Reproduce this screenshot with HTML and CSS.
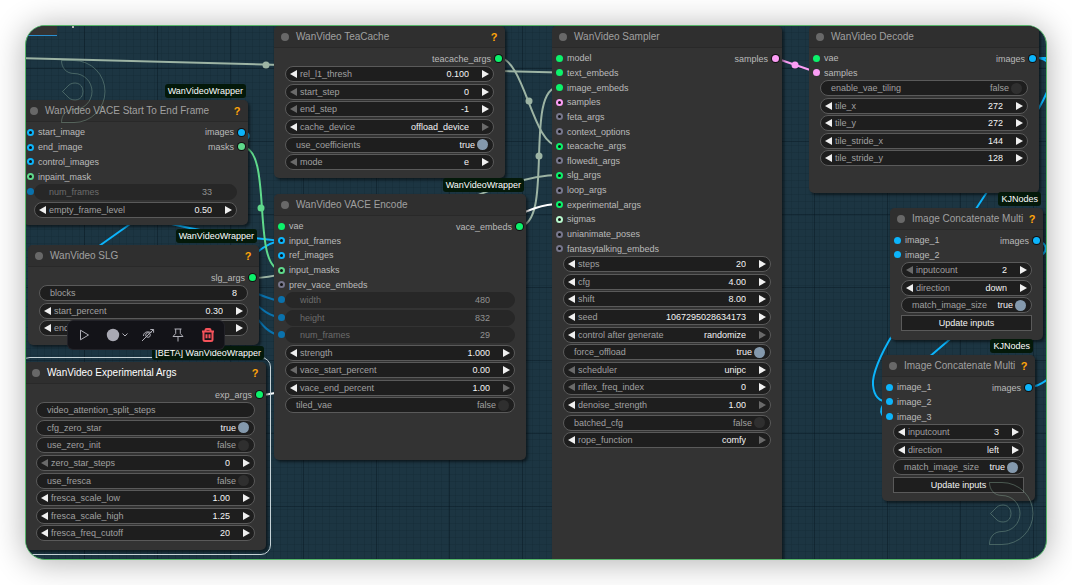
FILE: index.html
```
<!DOCTYPE html>
<html lang="en">
<head>
  <meta charset="utf-8" />
  <title>WanVideo workflow</title>
  <meta name="viewport" content="width=device-width, initial-scale=1" />

  <link rel="stylesheet" href="styles.css">
</head>
<body>
  <main class="canvas" id="canvas">
    <svg class="links" aria-hidden="true">
      <g transform="translate(-26 -26)">
        <g class="link sage">
          <path d="M20 58 L559 72.500" />
          <path d="M498 57.600 C525 57.600 532 146 559 146" />
          <path d="M519 226 C555 226 523 87 559 87" />
          <path d="M252 278 C333 278 478 175 559 175" />
          <circle cx="266" cy="65" r="3.500" />
          <circle cx="529" cy="101" r="3.500" />
          <circle cx="539" cy="156" r="3.500" />
        </g>
        <g class="link blue">
          <path d="M85 256 L140 217" />
          <path d="M160 221 C200 232 250 238 282 241" />
          <path d="M255 254 C263 247 272 241 282 241" />
          <path d="M242 132 C250 132 250 137 246 140" />
          <path d="M1033 58 H1060" />
          <path d="M1039 58 C1060 62 1052 85 1039 108 L987 192 L970 218" />
          <path d="M1036 241 C1048 242 1048 252 1040 256 L949 340 L928 358" />
          <path d="M893 334 C880 355 872 375 873 385 C874 397 880 402 889 402" />
          <path d="M883 405 C880 410 881 414 884 417" />
          <path d="M1029 387 C1037 387 1042 384 1048 379" />
        </g>
        <g class="link navy">
          <path d="M250 291 C262 295 270 300 282 301" />
          <path d="M250 298 C262 311 270 316 282 318" />
          <path d="M250 308 C262 327 270 334 282 336" />
        </g>
        <g class="link green">
          <path d="M242 147 C274 147 250 270 282 270" />
          <circle cx="261" cy="208" r="3.500" />
        </g>
        <g class="link pink">
          <path d="M775 58 L816 72" />
          <circle cx="795" cy="65" r="3.500" />
        </g>
        <g class="link white">
          <path d="M259 395 C348 395 470 204 559 204" />
        </g>
        <path class="group-corner" d="M26 26 H57 V35 H26 Z" />
        <path class="group-edge" d="M26 35.500 H57" />
        <path class="group-mark" d="M73 25 V28" />
      </g>
    </svg>

    <div class="toolbar" role="toolbar" aria-label="Selection">
      <button type="button" aria-label="Run">
        <svg width="12" height="12" viewBox="0 0 12 12"><path d="M2.500 1.200 L10.500 6 L2.500 10.800 Z" /></svg>
      </button>
      <button type="button" class="color" aria-label="Color">
        <svg width="19" height="14" viewBox="0 0 19 14"><circle cx="7" cy="7" r="6.200" /><path d="M16.500 5.500 L19 8 L21.500 5.500" /></svg>
      </button>
      <button type="button" aria-label="Bypass">
        <svg width="14" height="14" viewBox="0 0 14 14"><circle cx="7" cy="7" r="2.300" /><path d="M1 13 L12.300 1.700 M2.500 8 C2.500 4.500 5.500 3.500 8 4 L10.500 4.500 M9.300 1.500 H12.600 V4.700" /></svg>
      </button>
      <button type="button" aria-label="Pin">
        <svg width="14" height="14" viewBox="0 0 14 14"><path d="M3.500 1 H10.500 M4.700 1 V5.500 L2 8.500 H12 L9.300 5.500 V1 M7 8.500 V13.500" /></svg>
      </button>
      <button type="button" class="danger" aria-label="Delete">
        <svg width="14" height="14" viewBox="0 0 14 14"><path d="M1 3.500 H13 M4.500 3.500 V2 Q4.500 1 5.500 1 H8.500 Q9.500 1 9.500 2 V3.500 M2.500 3.500 V11.500 Q2.500 13 4 13 H10 Q11.500 13 11.500 11.500 V3.500 M5.500 6.300 V10.300 M8.500 6.300 V10.300" /></svg>
      </button>
    </div>

    <svg class="watermark" aria-hidden="true">
      <defs>
        <g id="mark">
          <path d="M.5 .5 H13 A31 31 0 0 1 13 62.500 H.5 C.5 55 5 49.500 13 49.500 A18 18 0 0 0 13 13.500 C5 13.500 .5 7.500 .5 .5 Z" />
          <path d="M1.500 31.500 L8 25 C12 21.500 22 22 22 31.500 C22 41 12 41.500 8 38 Z" />
        </g>
      </defs>
      <use href="#mark" x="35" y="34" />
      <use href="#mark" x="963" y="456" />
    </svg>
  </main>

  <script src="graph.js"></script>
</body>
</html>
```
FILE: graph.js
```
const SCALE = 11 / 15;
const SLOT_HEIGHT = 20 * SCALE;
const WIDGET_HEIGHT = 24 * SCALE;

// slot: [name, colour, optional]
// widget: [type, name, value, dimmed arrow: "l" or "r"]
const nodes = [
  {
    title: "WanVideo TeaCache", x: 248, y: 0, w: 231, h: 152, help: true,
    outputs: [["teacache_args", "green"]],
    widgets: [
      ["number", "rel_l1_thresh", "0.100"],
      ["number", "start_step", "0", "l"],
      ["number", "end_step", "-1", "l"],
      ["combo", "cache_device", "offload_device", "r"],
      ["toggle", "use_coefficients", true],
      ["combo", "mode", "e", "l"]
    ]
  },
  {
    title: "WanVideo VACE Encode", x: 248, y: 168, w: 252, h: 266, badge: "WanVideoWrapper",
    inputs: [["vae", "green"], ["input_frames", "blue", 1], ["ref_images", "blue", 1], ["input_masks", "mint", 1], ["prev_vace_embeds", "grey", 1]],
    outputs: [["vace_embeds", "green"]],
    widgets: [
      ["linked", "width", "480"],
      ["linked", "height", "832"],
      ["linked", "num_frames", "29"],
      ["number", "strength", "1.000"],
      ["number", "vace_start_percent", "0.00", "l"],
      ["number", "vace_end_percent", "1.00", "r"],
      ["toggle", "tiled_vae", false]
    ]
  },
  {
    title: "WanVideo VACE Start To End Frame", x: -3, y: 74, w: 225, h: 125, help: true, badge: "WanVideoWrapper",
    inputs: [["start_image", "blue", 1], ["end_image", "blue", 1], ["control_images", "blue", 1], ["inpaint_mask", "mint", 1]],
    outputs: [["images", "blue"], ["masks", "mint"]],
    widgets: [
      ["linked", "num_frames", "33"],
      ["number", "empty_frame_level", "0.50"]
    ]
  },
  {
    title: "WanVideo SLG", x: 2, y: 219, w: 231, h: 100, help: true, badge: "WanVideoWrapper",
    outputs: [["slg_args", "green"]],
    widgets: [
      ["text", "blocks", "8"],
      ["number", "start_percent", "0.30"],
      ["number", "end_percent", ""]
    ]
  },
  {
    title: "WanVideo Experimental Args", x: -1, y: 336, w: 241, h: 188, help: true, badge: "[BETA] WanVideoWrapper", selected: true,
    outputs: [["exp_args", "green"]],
    widgets: [
      ["text", "video_attention_split_steps", ""],
      ["toggle", "cfg_zero_star", true],
      ["toggle", "use_zero_init", false],
      ["number", "zero_star_steps", "0", "l"],
      ["toggle", "use_fresca", false],
      ["number", "fresca_scale_low", "1.00"],
      ["number", "fresca_scale_high", "1.25"],
      ["number", "fresca_freq_cutoff", "20"]
    ]
  },
  {
    title: "WanVideo Sampler", x: 526, y: 0, w: 230, h: 560,
    inputs: [
      ["model", "green"], ["text_embeds", "green"], ["image_embeds", "green"], ["samples", "pink", 1],
      ["feta_args", "grey", 1], ["context_options", "grey", 1], ["teacache_args", "green", 1],
      ["flowedit_args", "grey", 1], ["slg_args", "green", 1], ["loop_args", "grey", 1],
      ["experimental_args", "green", 1], ["sigmas", "pale", 1], ["unianimate_poses", "grey", 1],
      ["fantasytalking_embeds", "grey", 1]
    ],
    outputs: [["samples", "pink"]],
    widgets: [
      ["number", "steps", "20"],
      ["number", "cfg", "4.00"],
      ["number", "shift", "8.00"],
      ["number", "seed", "1067295028634173"],
      ["combo", "control after generate", "randomize", "r"],
      ["toggle", "force_offload", true],
      ["combo", "scheduler", "unipc", "l"],
      ["number", "riflex_freq_index", "0", "l"],
      ["number", "denoise_strength", "1.00", "r"],
      ["toggle", "batched_cfg", false],
      ["combo", "rope_function", "comfy", "r"]
    ]
  },
  {
    title: "WanVideo Decode", x: 783, y: 0, w: 230, h: 167,
    inputs: [["vae", "green"], ["samples", "pink"]],
    outputs: [["images", "blue"]],
    widgets: [
      ["toggle", "enable_vae_tiling", false],
      ["number", "tile_x", "272"],
      ["number", "tile_y", "272"],
      ["number", "tile_stride_x", "144"],
      ["number", "tile_stride_y", "128"]
    ]
  },
  {
    title: "Image Concatenate Multi", x: 864, y: 182, w: 153, h: 132, help: true, badge: "KJNodes",
    inputs: [["image_1", "blue"], ["image_2", "blue"]],
    outputs: [["images", "blue"]],
    widgets: [
      ["number", "inputcount", "2", "l"],
      ["combo", "direction", "down"],
      ["toggle", "match_image_size", true],
      ["button", "Update inputs"]
    ]
  },
  {
    title: "Image Concatenate Multi", x: 856, y: 329, w: 153, h: 146, help: true, badge: "KJNodes",
    inputs: [["image_1", "blue"], ["image_2", "blue"], ["image_3", "blue"]],
    outputs: [["images", "blue"]],
    widgets: [
      ["number", "inputcount", "3"],
      ["combo", "direction", "left"],
      ["toggle", "match_image_size", true],
      ["button", "Update inputs"]
    ]
  }
];

function slotList(slots, side) {
  const items = slots.map(([name, colour, optional]) =>
    `<li class="slot"><span class="dot ${colour}${optional ? " ring" : ""}"></span>${name}</li>`
  ).join("");
  return `<ul class="slots ${side}" style="height:${Math.round(slots.length * SLOT_HEIGHT)}px">${items}</ul>`;
}

function arrow(side, dim, name) {
  const points = side === "l" ? "7,0 7,8 0,4" : "0,0 0,8 7,4";
  const action = side === "l" ? "Previous" : "Next";
  return `<button type="button" class="arrow ${side}${dim === side ? " dim" : ""}" aria-label="${action} ${name}">
    <svg width="7" height="8"><polygon points="${points}" /></svg></button>`;
}

function widget([type, name, value, dim], id) {
  const label = `<label for="${id}">${name}</label>`;
  if (type === "button") {
    return `<div class="row"><button type="button" class="action">${name}</button></div>`;
  }
  if (type === "toggle") {
    return `<div class="row"><div class="widget toggle">${label}<span class="state">${value}</span>
      <input type="checkbox" id="${id}"${value ? " checked" : ""}></div></div>`;
  }
  if (type === "text") {
    return `<div class="row"><div class="widget text">${label}<input type="text" id="${id}" value="${value}"></div></div>`;
  }
  if (type === "linked") {
    return `<div class="row"><span class="dot link-in"></span><div class="widget linked">${label}
      <input type="text" id="${id}" value="${value}" disabled></div></div>`;
  }
  const field = type === "combo"
    ? `<select id="${id}"><option>${value}</option></select>`
    : `<input type="text" inputmode="decimal" id="${id}" value="${value}">`;
  return `<div class="row"><div class="widget">${arrow("l", dim, name)}${label}${field}${arrow("r", dim, name)}</div></div>`;
}

const canvas = document.getElementById("canvas");
const toolbar = canvas.querySelector(".toolbar");

nodes.forEach((n, i) => {
  const el = document.createElement("section");
  el.className = "node" + (n.selected ? " selected" : "");
  el.style.cssText = `left:${n.x}px;top:${n.y}px;width:${n.w}px;min-height:${n.h}px`;
  el.innerHTML = `
    ${n.badge ? `<span class="badge">${n.badge}</span>` : ""}
    <header class="title">
      <span class="collapse"></span>
      <h2>${n.title}</h2>
      ${n.help ? `<button type="button" class="help" aria-label="Help">?</button>` : ""}
    </header>
    <div class="io">${slotList(n.inputs || [], "in")}${slotList(n.outputs, "out")}</div>
    <div class="widgets" style="height:${Math.round(n.widgets.length * WIDGET_HEIGHT)}px">
      ${n.widgets.map((w, j) => widget(w, `w${i}-${j}`)).join("")}
    </div>`;
  canvas.insertBefore(el, toolbar);
});

canvas.addEventListener("change", e => {
  if (e.target.type === "checkbox") {
    e.target.previousElementSibling.textContent = e.target.checked;
  }
});
```
FILE: styles.css
```
:root {
  --canvas: #1c3542;
  --node: #333333;
  --title: #2f2f2f;
  --widget: #1e1e1e;
  --outline: #5a5a5a;
  --text: #bababa;
  --sub: #a0a0a0;
  --value: #f4f4f4;
  --green: #0cf26b;
  --mint: #5fd98b;
  --blue: #0cb4fb;
  --navy: #0a72ad;
  --pink: #fb9df5;
  --pale: #b8f7cd;
  --grey: #77778c;
  --sage: #9db4a4;
}

* { box-sizing: border-box; margin: 0; padding: 0; }

body {
  min-height: 100vh;
  padding: 25px;
  display: flex;
  background: #ffffff;
  font-family: "Liberation Sans", Arial, sans-serif;
  font-size: 9px;
  color: var(--text);
}

button, input, select {
  font: inherit;
  color: inherit;
  background: none;
  border: 0;
}

.canvas {
  position: relative;
  flex: 1;
  overflow: hidden;
  border: 1px solid #55b568;
  border-radius: 20px;
  box-shadow: 0 2px 32px rgba(0,0,0,.32);
  background-color: var(--canvas);
  background-image:
    linear-gradient(rgba(8,24,34,.45) 1px, transparent 1px),
    linear-gradient(90deg, rgba(8,24,34,.45) 1px, transparent 1px),
    repeating-linear-gradient(rgba(8,24,34,.13) 0 1px, transparent 1px 7px),
    repeating-linear-gradient(90deg, rgba(8,24,34,.13) 0 1px, transparent 1px 7px);
  background-size: 73px 73px, 73px 73px, auto, auto;
  background-position: 58px 42px;
}

.links, .watermark {
  position: absolute;
  inset: 0;
  width: 100%;
  height: 100%;
}

.link { fill: none; stroke-width: 2; }
.link circle { stroke: none; }
.sage { stroke: var(--sage); }
.sage circle { fill: var(--sage); }
.link.blue { stroke: var(--blue); }
.navy { stroke: var(--navy); }
.link.green { stroke: var(--mint); }
.link.green circle { fill: var(--mint); }
.link.pink { stroke: var(--pink); }
.link.pink circle { fill: var(--pink); }
.white { stroke: #ffffff; }
.group-corner { fill: #333333; }
.group-edge { stroke: #2a8fd0; }
.group-mark { stroke: #b4b4b4; stroke-width: 2; }

.watermark {
  pointer-events: none;
  fill: none;
  stroke: rgba(140,175,155,.4);
}

.node {
  position: absolute;
  background: var(--node);
  border-radius: 5px;
  box-shadow: 2px 2px 3px rgba(0,0,0,.5);
}

.selected {
  outline: 1px solid #c6d2d6;
  outline-offset: 4px;
}

.badge {
  position: absolute;
  right: 2px;
  bottom: 100%;
  margin-bottom: 2px;
  padding: 0 3px;
  line-height: 14px;
  border-radius: 3px;
  background: #04190a;
  color: #ffffff;
  white-space: nowrap;
}

.title {
  display: flex;
  align-items: center;
  height: 22px;
  padding: 0 7px;
  background: var(--title);
  border-bottom: 1px solid #292929;
  border-radius: 5px 5px 0 0;
}

.title h2 {
  flex: 1;
  margin-left: 7px;
  font-size: 10px;
  font-weight: normal;
  white-space: nowrap;
  color: var(--sub);
}

.selected h2 { color: #ffffff; }

.collapse {
  width: 8px;
  height: 8px;
  border-radius: 50%;
  background: #686868;
}

.help {
  width: 8px;
  font-size: 11px;
  font-weight: bold;
  color: #ffa50a;
}

.io {
  display: flex;
  justify-content: space-between;
  align-items: flex-start;
  padding: 3px 3px 0 4px;
}

.slots {
  display: grid;
  grid-auto-rows: 1fr;
  list-style: none;
}

.slot {
  display: flex;
  align-items: center;
  gap: 4px;
  white-space: nowrap;
}

.out .slot { flex-direction: row-reverse; }

.dot {
  flex: none;
  width: 7px;
  height: 7px;
  border-radius: 50%;
  background: currentColor;
}

.out .dot { box-shadow: 0 0 0 1px #111111; }
.dot.ring { background: #111111; border: 2px solid; }
.dot.green { color: var(--green); }
.dot.mint { color: var(--mint); }
.dot.blue { color: var(--blue); }
.dot.pink { color: var(--pink); }
.dot.pale { color: var(--pale); }
.dot.grey { color: var(--grey); }

.widgets {
  display: grid;
  grid-auto-rows: 1fr;
  padding: 0 11px;
}

.row {
  position: relative;
  display: flex;
  align-items: flex-start;
}

.link-in {
  position: absolute;
  left: -7px;
  top: 4px;
  color: var(--navy);
}

.widget {
  flex: 1;
  display: flex;
  align-items: center;
  height: 16px;
  min-width: 0;
  background: var(--widget);
  border: 1px solid var(--outline);
  border-radius: 8px;
  color: var(--sub);
}

.widget label { flex: none; white-space: nowrap; }

.widget input[type="text"], .widget select {
  flex: 1;
  width: 0;
  min-width: 0;
  height: 14px;
  padding: 0;
  text-align: right;
  text-align-last: right;
  color: var(--value);
  appearance: none;
  outline: none;
}

.arrow {
  display: flex;
  align-items: center;
  width: 14px;
  height: 14px;
  fill: #f0f0f0;
}

.arrow.l { padding-left: 4px; }
.arrow.r { width: 24px; padding-left: 13px; }
.dim { fill: #6a6a6a; }

.toggle { padding: 0 5px 0 10px; }
.state { margin-left: auto; }
.toggle:has(:checked) .state { color: var(--value); }

.toggle input {
  width: 11px;
  height: 11px;
  margin-left: 2px;
  appearance: none;
  border-radius: 50%;
  background: #2f2f2f;
}

.toggle input:checked { background: #8499ad; }

.text { padding: 0 10px; }

.widget.linked {
  padding: 0 24px 0 14px;
  background: #272727;
  border-color: #272727;
  color: #6c6c6c;
}

.widget.linked input { color: #929292; }

.action {
  flex: 1;
  height: 16px;
  background: var(--widget);
  border: 1px solid var(--outline);
  color: var(--value);
}

.toolbar {
  position: absolute;
  left: 42px;
  top: 295px;
  display: flex;
  align-items: center;
  gap: 16px;
  height: 28px;
  padding: 0 9px 0 10px;
  background: #131318;
  border-radius: 5px;
  box-shadow: 0 0 0 1px #222228;
}

.toolbar button { display: flex; }

.toolbar svg {
  overflow: visible;
  fill: none;
  stroke: #b0b0b8;
}

.color circle { fill: #a9a9b3; stroke: none; }
.toolbar .danger svg { stroke: #f4525a; stroke-width: 2; }
```
